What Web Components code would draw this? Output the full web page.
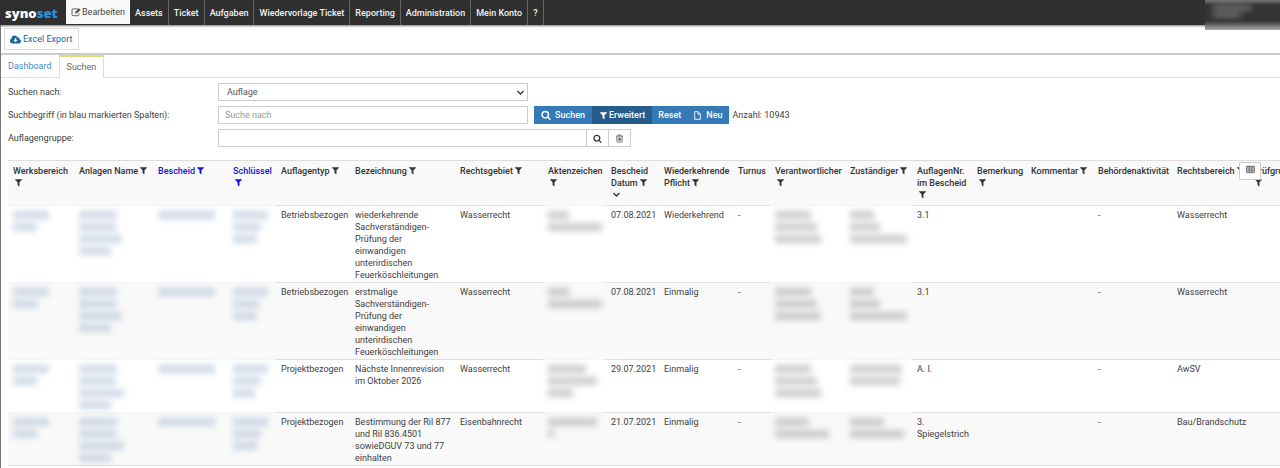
<!DOCTYPE html>
<html lang="de">
<head>
<meta charset="utf-8">
<title>synoset – Suchen</title>
<style>
  body { margin: 0; background: #fff; color: #404040; font: 9px/12px Roboto, "Liberation Sans", sans-serif; }
</style>
</head>
<body>
<app-shell>
  <app-header slot="header"></app-header>
  <tool-bar slot="tools"></tool-bar>
  <tab-bar>
    <tab-item href="#dashboard">Dashboard</tab-item>
    <tab-item href="#suchen" active>Suchen</tab-item>
  </tab-bar>
  <search-form></search-form>
  <data-grid></data-grid>
</app-shell>

<script>
const define = (name, html, after) => {
  const tpl = document.createElement('template');
  tpl.innerHTML = html;
  customElements.define(name, class extends HTMLElement {
    constructor() {
      super();
      this.attachShadow({ mode: 'open' }).append(tpl.content.cloneNode(true));
    }
    connectedCallback() { if (after) after(this, this.shadowRoot); }
  });
};

const ICONS = {
  filter: '<path d="M1595 295q17 41-14 70l-493 493v742q0 42-39 59-13 5-25 5-27 0-45-19l-256-256q-19-19-19-45v-486l-493-493q-31-29-14-70 17-39 59-39h1280q42 0 59 39z"/>',
  search: '<path d="M1216 832q0-185-131.5-316.5t-316.5-131.5-316.5 131.5-131.5 316.5 131.5 316.5 316.5 131.5 316.5-131.5 131.5-316.5zm512 832q0 52-38 90t-90 38q-54 0-90-38l-343-342q-179 124-399 124-143 0-273.5-55.5t-225-150-150-225-55.5-273.5 55.5-273.5 150-225 225-150 273.5-55.5 273.5 55.5 225 150 150 225 55.5 273.5q0 220-124 399l343 343q37 37 37 90z"/>',
  cloud: '<path fill-rule="evenodd" d="M420 1540C180 1540 0 1360 0 1130C0 960 100 820 250 750C240 450 460 250 740 250C950 250 1120 370 1200 550C1400 500 1560 640 1540 850C1690 890 1792 1020 1792 1190C1792 1390 1640 1540 1440 1540ZM780 640V960H560L900 1330L1240 960H1020V640Z"/>',
  edit: '<g fill="none" stroke="currentColor" stroke-width="150"><path d="M1180 330H370Q180 330 180 520V1370Q180 1560 370 1560H1220Q1410 1560 1410 1370V1130"/></g><path fill-rule="evenodd" d="M1430 220L1700 490L1010 1180H740V910ZM850 960V1070H950L1000 1020L900 910Z"/>',
  file: '<g fill="none" stroke="currentColor" stroke-width="170" stroke-linejoin="round"><path d="M330 120H1000L1470 590V1670H330Z"/><path d="M980 130V620H1460"/></g>',
  trash: '<g fill="none" stroke="currentColor" stroke-width="130" stroke-linejoin="round"><path d="M200 420H1590M620 400L700 180H1090L1170 400M370 430V1480Q370 1620 500 1620H1290Q1420 1620 1420 1480V430M680 700V1340M896 700V1340M1112 700V1340"/></g>',
  table: '<g fill="none" stroke="currentColor" stroke-width="130"><path d="M130 260H1660V1530H130Z"/><path d="M130 390H1660M130 800H1660M130 1170H1660M640 400V1530M1150 400V1530"/></g>',
  down: '<path d="M300 620L896 1190L1492 620" fill="none" stroke="currentColor" stroke-width="270"/>'
};

define('app-icon', `
  <style>
    :host { display: inline-block; width: 9px; height: 9px; vertical-align: -1px; }
    :host([size="m"]) { width: 10px; height: 10px; vertical-align: -2px; }
    :host([size="l"]) { width: 11px; height: 11px; vertical-align: -2px; }
    svg { display: block; width: 100%; height: 100%; fill: currentColor; }
  </style>
  <svg viewBox="0 0 1792 1792" aria-hidden="true"></svg>`,
  (el, root) => { root.querySelector('svg').innerHTML = ICONS[el.getAttribute('name')]; });

define('app-shell', `
  <style>
    :host { display: block; height: 100vh; overflow: hidden; }
    .page { display: flex; flex-direction: column; height: 100%; }
    .main { flex: 1; min-height: 0; border-left: 1px solid #777; }
  </style>
  <div class="page">
    <slot name="header"></slot>
    <div class="main"><slot name="tools"></slot><main><slot></slot></main></div>
  </div>`);

define('nav-item', `
  <style>
    :host { display: block; }
    a { display: flex; align-items: center; gap: 1px; box-sizing: border-box; height: 25px; padding: 0 5px;
        border-right: 1px solid #666; color: #f2f2f2; font-weight: 500; text-decoration: none; white-space: nowrap; }
    :host([active]) a { height: 24px; border: 0; background: #f8f8f8; color: #444; font-weight: 400; }
  </style>
  <a><slot></slot></a>`,
  (el, root) => { root.querySelector('a').href = '#' + (el.getAttribute('to') || ''); });

define('app-header', `
  <style>
    :host { display: block; height: 25px; background: #2f2f2f; box-shadow: 0 1px 2px #777; position: relative; }
    header, nav { display: flex; align-items: flex-start; }
    .logo { box-sizing: border-box; width: 66px; padding: 5px 0 0 5px; color: #fff; font: 800 13px/16px "Open Sans", sans-serif; text-decoration: none; }
    .logo span { color: #2a8fd8; }
    .user { margin-left: auto; width: 75px; height: 30px; overflow: hidden;
      background: linear-gradient(#777, #333 5px, #333 21px, #aaa 30px); }
    .user i { display: block; width: 38px; height: 5px; margin: 5px 0 0 8px; background: #777; filter: blur(3px); }
    .user i + i { width: 28px; margin: 2px 0 0 8px; }
  </style>
  <header>
    <a class="logo" href="#home">syno<span>set</span></a>
    <nav>
      <nav-item to="bearbeiten" active><app-icon name="edit" size="m"></app-icon>Bearbeiten</nav-item>
      <nav-item to="assets">Assets</nav-item>
      <nav-item to="ticket">Ticket</nav-item>
      <nav-item to="aufgaben">Aufgaben</nav-item>
      <nav-item to="wiedervorlage">Wiedervorlage Ticket</nav-item>
      <nav-item to="reporting">Reporting</nav-item>
      <nav-item to="administration">Administration</nav-item>
      <nav-item to="konto">Mein Konto</nav-item>
      <nav-item to="hilfe">?</nav-item>
    </nav>
    <div class="user"><i></i><i></i></div>
  </header>`);

define('tool-bar', `
  <style>
    :host { display: block; padding: 3px 3px; border-bottom: 2px solid #ccc; }
    button { display: flex; align-items: center; gap: 2px; height: 22px; padding: 0 6px 0 5px; border: 1px solid #ddd;
      background: #fff; color: #17659f; font: inherit; }
  </style>
  <button type="button"><app-icon name="cloud" size="l"></app-icon>Excel Export</button>`);

define('tab-bar', `
  <style>
    :host { display: flex; height: 22px; border-bottom: 1px solid #ddd; }
  </style>
  <slot></slot>`);

define('tab-item', `
  <style>
    :host { display: block; }
    a { display: block; box-sizing: border-box; height: 22px; padding: 5px 7px 0; color: #4a8abf; text-decoration: none; }
    :host([active]) a { height: 23px; padding: 4px 7px 0; border: 1px solid #ddd; border-top: 2px solid #e6d67c;
      border-bottom: 0; background: #fff; color: #666; }
  </style>
  <a><slot></slot></a>`,
  (el, root) => { root.querySelector('a').href = el.getAttribute('href'); });

define('search-form', `
  <style>
    :host { display: block; padding: 5px 7px 13px; }
    form { display: grid; grid-template-columns: 210px 1fr; row-gap: 5px; align-items: center; }
    .row { display: flex; align-items: center; height: 18px; }
    input, select { box-sizing: border-box; width: 310px; height: 18px; margin: 0; padding: 0 6px; border: 1px solid #ccc;
      border-radius: 0; background: #fff; color: #555; font: inherit; outline: 0; appearance: none; }
    select { padding: 0 8px; }
    input::placeholder { color: #999; }
    .select { display: flex; position: relative; }
    .select app-icon { position: absolute; right: 3px; top: 5px; pointer-events: none; color: #333; }
    .group { width: 369px; }
    button { display: flex; align-items: center; justify-content: center; gap: 4px; box-sizing: border-box; height: 18px;
      margin: 0; padding: 0 7px; border: 0; background: #337ab7; color: #fff; font: inherit; font-weight: 500; }
    button.on { background: #265c8c; gap: 1px; padding: 0 7px; }
    button.plain { padding: 0 6px; }
    .actions { display: flex; margin: 0 4px 0 6px; }
    .square { width: 23px; padding: 0; margin-left: -1px; border: 1px solid #ccc; background: #fff; color: #333; }
  </style>
  <form>
    <label for="kind">Suchen nach:</label>
    <div class="row"><span class="select"><select id="kind"><option>Auflage</option></select><app-icon name="down"></app-icon></span></div>
    <label for="term">Suchbegriff (in blau markierten Spalten):</label>
    <div class="row">
      <input id="term" type="text" placeholder="Suche nach">
      <div class="actions">
        <button type="button"><app-icon name="search" size="m"></app-icon>Suchen</button>
        <button type="button" class="on"><app-icon name="filter"></app-icon>Erweitert</button>
        <button type="button" class="plain">Reset</button>
        <button type="button" class="plain"><app-icon name="file"></app-icon>Neu</button>
      </div>
      <span>Anzahl: 10943</span>
    </div>
    <label for="group">Auflagengruppe:</label>
    <div class="row">
      <input id="group" class="group" type="text">
      <button type="button" class="square" aria-label="Gruppe suchen"><app-icon name="search"></app-icon></button>
      <button type="button" class="square" aria-label="Gruppe löschen"><app-icon name="trash"></app-icon></button>
    </div>
  </form>`);

/* Redacted value: one smeared bar per hidden line, lengths taken from "lines". */
define('redacted-text', `
  <style>
    :host { display: block; color: #999; }
    :host([link]) { color: #9fb4cf; }
    i { display: block; height: 8px; margin: 2px 0; background: currentColor; filter: blur(3px); opacity: .5; }
    i + i { margin-top: 4px; }
  </style>`,
  (el, root) => {
    for (const w of el.getAttribute('lines').split(' ')) {
      const bar = document.createElement('i');
      bar.style.width = w + 'px';
      root.append(bar);
    }
  });

/* title, column width, has filter, searchable */
const COLUMNS = [
  ['Werksbereich', 66, 1], ['Anlagen Name', 79, 1], ['Bescheid', 75, 1, 1], ['Schlüssel', 48, 1, 1],
  ['Auflagentyp', 74, 1], ['Bezeichnung', 105, 1], ['Rechtsgebiet', 88, 1], ['Aktenzeichen', 63, 1],
  ['Bescheid Datum', 53, 1], ['Wiederkehrende Pflicht', 74, 1], ['Turnus', 37, 0], ['Verantwortlicher', 75, 1],
  ['Zuständiger', 67, 1], ['AuflagenNr. im Bescheid', 60, 1], ['Bemerkung', 54, 1], ['Kommentar', 67, 1],
  ['Behördenaktivität', 79, 0], ['Rechtsbereich', 76, 1], ['Prüfgru', 40, 1]
];
const link = lines => ({ lines, link: true });
const gray = lines => ({ lines });
const ROWS = [
  [link('36 24'), link('38 37 43 32'), link('57'), link('35 28 24'), 'Betriebsbezogen',
   'wiederkehrende Sachverständigen-Prüfung der einwandigen unterirdischen Feuerköschleitungen', 'Wasserrecht', gray('21 54'),
   '07.08.2021', 'Wiederkehrend', '-', gray('36 42 46'), gray('24 30 57'), '3.1', '', '', '-', 'Wasserrecht', ''],
  [link('36 24'), link('38 37 43 32'), link('57'), link('35 26 24'), 'Betriebsbezogen',
   'erstmalige Sachverständigen-Prüfung der einwandigen unterirdischen Feuerköschleitungen', 'Wasserrecht', gray('21 54'),
   '07.08.2021', 'Einmalig', '-', gray('36 42 46'), gray('24 30 57'), '3.1', '', '', '-', 'Wasserrecht', ''],
  [link('36 24'), link('38 37 45 32'), link('57'), link('35 28 22'), 'Projektbezogen',
   'Nächste Innenrevision im Oktober 2026', 'Wasserrecht', gray('38 49 25'),
   '29.07.2021', 'Einmalig', '-', gray('36 42 46'), gray('52 50'), 'A. I.', '', '', '-', 'AwSV', ''],
  [link('36 24'), link('38 37 45 32'), link('57'), link('35 28 24'), 'Projektbezogen',
   'Bestimmung der Ril 877 und Ril 836.4501 sowieDGUV 73 und 77 einhalten', 'Eisenbahnrecht', gray('49 6'),
   '21.07.2021', 'Einmalig', '-', gray('34 54'), gray('34 54'), '3. Spiegelstrich', '', '', '-', 'Bau/Brandschutz', ''],
  ['', '', '', '', '', '', '', '', '', '', '', '', '', '', '', '', '', '', '']
];

define('data-grid', `
  <style>
    :host { display: block; position: relative; margin-left: 7px; }
    .scroll { overflow: hidden; }
    table { table-layout: fixed; border-collapse: separate; border-spacing: 0; }
    th, td { box-sizing: border-box; padding: 3px 0 1px 5px; border-top: 1px solid #ddd; text-align: left; vertical-align: top; }
    th { height: 45px; padding-top: 4px; background: #f9f9f9; color: #333; font-weight: 500; }
    th app-icon { margin-left: 1px; }
    th .sort { display: block; }
    th.key { color: #1414e0; }
    tbody tr:nth-child(even) { background: #f9f9f9; }
    td:nth-child(6) { padding-right: 16px; }
    tbody tr:nth-child(n+3) td:nth-child(6) { padding-right: 4px; }
    td.hidden { border-top-color: #f4f4f4; }
    .columns { position: absolute; right: 19px; top: 2px; width: 22px; height: 18px; display: flex; align-items: center;
      justify-content: center; padding: 0 0 3px; border: 1px solid #ccc; background: #fff; color: #333; }
  </style>
  <div class="scroll"><table><colgroup></colgroup><thead><tr></tr></thead><tbody></tbody></table></div>
  <button type="button" class="columns" aria-label="Spalten wählen"><app-icon name="table"></app-icon></button>`,
  (el, root) => {
    const head = root.querySelector('thead tr');
    const group = root.querySelector('colgroup');
    let total = 0;
    for (const [title, width, filter, key] of COLUMNS) {
      total += width;
      const col = document.createElement('col');
      col.style.width = width + 'px';
      group.append(col);
      const th = document.createElement('th');
      th.scope = 'col';
      if (key) th.className = 'key';
      th.innerHTML = title + (filter ? '<app-icon name="filter"></app-icon>' : '') +
        (title === 'Bescheid Datum' ? '<span class="sort"><app-icon name="down"></app-icon></span>' : '');
      head.append(th);
    }
    root.querySelector('table').style.width = total + 'px';
    const body = root.querySelector('tbody');
    for (const row of ROWS) {
      const tr = body.insertRow();
      for (const value of row) {
        const td = tr.insertCell();
        if (value.lines) {
          td.className = 'hidden';
          td.innerHTML = `<redacted-text lines="${value.lines}"${value.link ? ' link' : ''}></redacted-text>`;
        } else td.textContent = value;
      }
    }
  });
</script>
</body>
</html>
